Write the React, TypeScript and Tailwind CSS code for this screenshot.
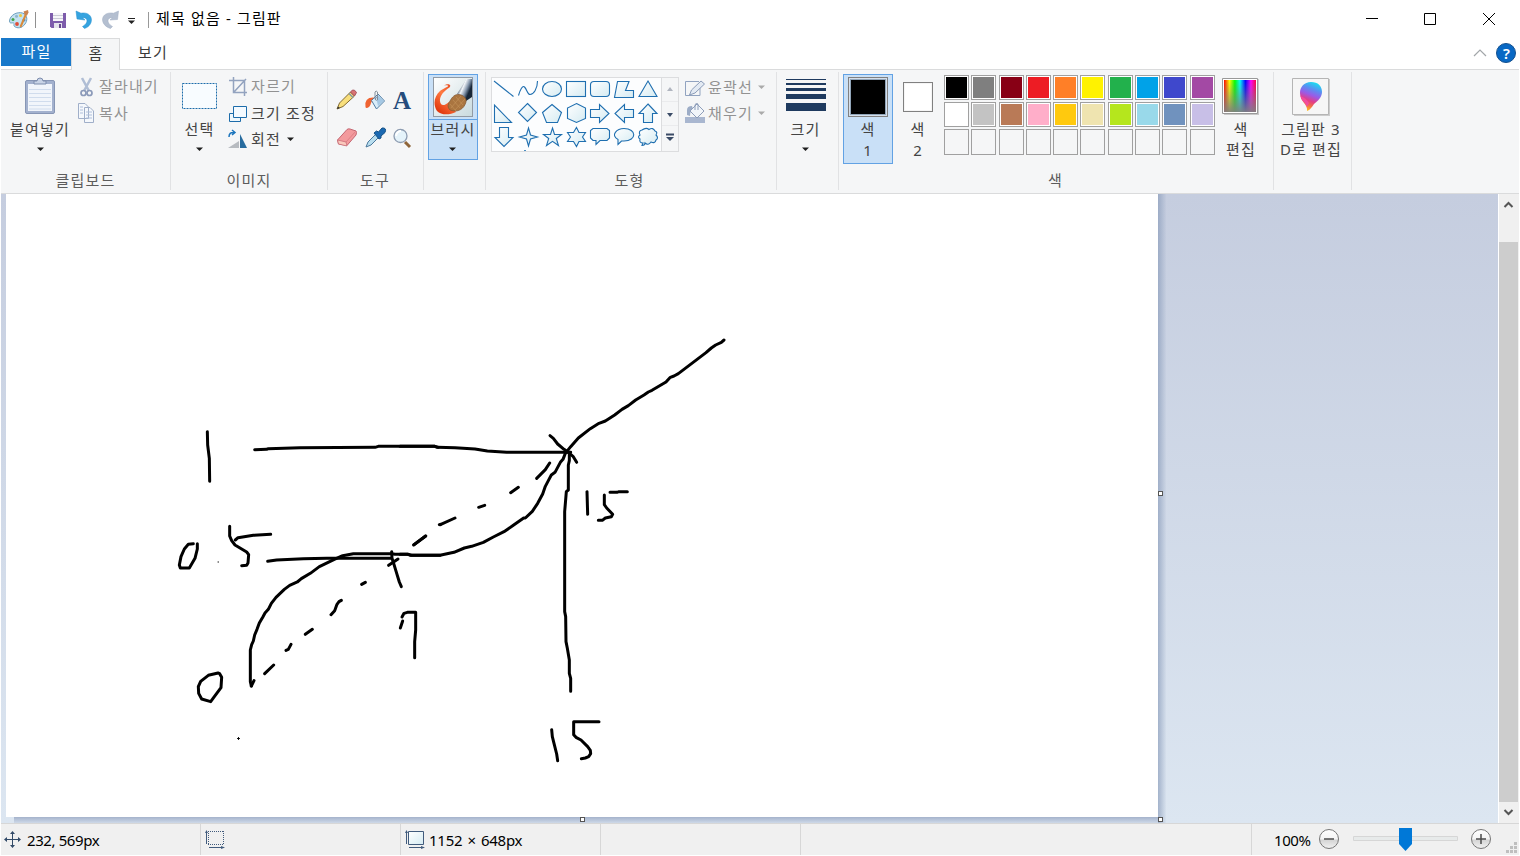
import type { ReactNode } from 'react';

type IconProps = { box: string; w: number; h: number; className?: string; children: ReactNode };

function Icon({ box, w, h, className = '', children }: IconProps) {
  return (
    <svg viewBox={box} width={w} height={h} fill="none" className={'block shrink-0 ' + className}>
      {children}
    </svg>
  );
}

function Caret({ color = '#1e1e1e', className = '' }: { color?: string; className?: string }) {
  return (
    <Icon box="0 0 7 4" w={7} h={4} className={className}>
      <path d="M0 0.5H7L3.5 4Z" fill={color} />
    </Icon>
  );
}

function Group({ label, className, children }: { label?: string; className: string; children?: ReactNode }) {
  return (
    <section className={'flex h-[118px] shrink-0 flex-col border-r border-[#e1e2e4] ' + className}>
      <div className="flex h-[96px] shrink-0 items-start">{children}</div>
      <div className="text-center leading-[24px] text-[#5c5c5c]">{label}</div>
    </section>
  );
}

const stroke = '#1f6fb0';

const shapes: ReactNode[] = [
  <path d="M-10 -8L9.500 7.500" />,
  <path d="M-9.500 6.500C-8 1-5.500-4-3.500-2C-1 0.500-0.500 5.500 2 5.500C5.500 5.500 9.500 0 9.500-8" fill="none" />,
  <ellipse rx="9.500" ry="7.500" />,
  <rect x="-9.500" y="-7.500" width="19" height="15" />,
  <rect x="-9.500" y="-7.500" width="19" height="15" rx="3.500" />,
  <path d="M-6.500-7.500H5L1.500 1.500H9.500V8.500H-9.500Z" />,
  <path d="M0-8L9 7.500H-9Z" />,
  <path d="M-9.500-8V9.500H7.500Z" />,
  <path d="M-0.500-9.500L8.500-0.500L-0.500 8.500L-9.500-0.500Z" />,
  <path d="M0-8.500L9.500-0.500L5.500 9.500H-5.500L-9.500-0.500Z" />,
  <path d="M0.500-9.500L9.500-5V5.500L0.500 9.500L-8.500 5.500V-5Z" />,
  <path d="M-9.500-3.500H-0.500V-8.500L9 0.500L-0.500 9.500V4.500H-9.500Z" />,
  <path d="M9.500-3.500H0.500V-8.500L-9 0.500L0.500 9.500V4.500H9.500Z" />,
  <path d="M0-9L9 0.500H4.500V9.500H-4.500V0.500H-9Z" />,
  <path d="M-4.500-9.500H4.500V0.500H9L0 9.500L-9 0.500H-4.500Z" />,
  <path d="M0.500-9L2.500-2L9.500 0L2.500 2L0.500 9L-1.500 2L-8.500 0L-1.500-2Z" />,
  <path d="M0.500-9L2.500-2.500H9.500L4.300 1.500L6.500 8.500L0.500 4.300L-5.500 8.500L-3.300 1.500L-8.500-2.500H-1.500Z" />,
  <path d="M0.500-9.500L3-4.500H9.500L6.500 0L9.500 4.500H3L0.500 9.500L-2.500 4.500H-8.500L-5.500 0L-8.500-4.500H-2.500Z" />,
  <path d="M-7-8.500H7L9.500-6.500V1L7 3.500H0L-4 7.500V3.500H-7L-9.500 1V-6.500Z" />,
  <path d="M-6 7.500L-6 2.500C-14-2-7-8.500 0-8.500C13-8.500 13 4 0 4H-2.500Z" />,
  <path d="M-6-7Q-2-10 1-7.500Q5-10 7-6Q10-5 8-2Q11 1 8 3Q7 7 3 5Q0 9-3 6Q-3 8.500-6 8.500L-5 6Q-9 6-8 2Q-11 0-8-2Q-10-6-6-7Z" />,
];

const swatches = [
  '#000000', '#7f7f7f', '#880015', '#ed1c24', '#ff7f27', '#fff200', '#22b14c', '#00a2e8', '#3f48cc', '#a349a4',
  '#ffffff', '#c3c3c3', '#b97a57', '#ffaec9', '#ffc90e', '#efe4b0', '#b5e61d', '#99d9ea', '#7092be', '#c8bfe7',
];

function Gradients() {
  return (
    <svg width="0" height="0" className="absolute">
      <defs>
        <linearGradient id="shape" x1="0" y1="0" x2="1" y2="1">
          <stop offset="0" stopColor="#ffffff" />
          <stop offset="1" stopColor="#d5ebf2" />
        </linearGradient>
        <linearGradient id="spectrum">
          <stop offset="0" stopColor="#ff0000" />
          <stop offset="0.17" stopColor="#ffff00" />
          <stop offset="0.34" stopColor="#00ff00" />
          <stop offset="0.5" stopColor="#00ffff" />
          <stop offset="0.67" stopColor="#0000ff" />
          <stop offset="0.84" stopColor="#ff00ff" />
          <stop offset="1" stopColor="#ff0040" />
        </linearGradient>
        <linearGradient id="fade" x1="0" y1="0" x2="0" y2="1">
          <stop offset="0" stopColor="#808080" stopOpacity="0" />
          <stop offset="1" stopColor="#808080" stopOpacity="0.95" />
        </linearGradient>
        <linearGradient id="drop" x1="0.65" y1="0" x2="0.35" y2="1">
          <stop offset="0" stopColor="#16e0f0" />
          <stop offset="0.25" stopColor="#5b8df2" />
          <stop offset="0.45" stopColor="#9a5be6" />
          <stop offset="0.65" stopColor="#e33d88" />
          <stop offset="0.8" stopColor="#f06a4a" />
          <stop offset="1" stopColor="#ffc41c" />
        </linearGradient>
        <linearGradient id="sweep" x1="1" y1="0" x2="0.4" y2="1">
          <stop offset="0" stopColor="#e04018" />
          <stop offset="0.5" stopColor="#ff7b42" />
          <stop offset="1" stopColor="#e33a10" />
        </linearGradient>
        <linearGradient id="tile" x1="0" y1="0" x2="1" y2="1">
          <stop offset="0" stopColor="#ffffff" />
          <stop offset="1" stopColor="#c9dade" />
        </linearGradient>
        <linearGradient id="ferrule" x1="0.15" y1="0.3" x2="0.85" y2="0.75">
          <stop offset="0" stopColor="#2a3c55" />
          <stop offset="0.3" stopColor="#f4f7fa" />
          <stop offset="0.6" stopColor="#8092a8" />
          <stop offset="0.85" stopColor="#172638" />
        </linearGradient>
        <linearGradient id="knob" x1="0" y1="0" x2="0" y2="1">
          <stop offset="0" stopColor="#ffffff" />
          <stop offset="0.5" stopColor="#f4f4f4" />
          <stop offset="0.55" stopColor="#d4d4d4" />
          <stop offset="1" stopColor="#f2f2f2" />
        </linearGradient>
      </defs>
    </svg>
  );
}

function TitleBar() {
  return (
    <header className="flex h-[38px] shrink-0 items-center">
      <Icon box="1 0 49 38" w={49} h={38}>
        <path d="M9.500 21C10 15 17 11.500 22.500 13C28 15 27.500 21 25 24C22 28.500 17 28.500 14.500 26.500C13 25 15 23.500 13.500 23C12 22.500 9.500 24 9.500 21Z" fill="#c4e2f1" stroke="#6d9fbe" />
        <circle cx="13" cy="19.500" r="1.500" fill="#47a447" /><circle cx="16.500" cy="16.200" r="1.500" fill="#8fb6cc" />
        <circle cx="20.500" cy="15.500" r="1.500" fill="#f0c93c" /><circle cx="17" cy="24" r="1.900" fill="#e04d38" /><circle cx="24" cy="20" r="1.500" fill="#4286ce" />
        <path d="M20.500 27L26 14" stroke="#d98a3a" strokeWidth="2" />
        <path d="M24.500 14.500L23.500 11.500L28 10L28.500 12.500L27 15.500Z" fill="#c98450" />
        <path d="M35.500 12V28" stroke="#909090" />
      </Icon>
      <Icon box="50 0 22 38" w={22} h={38}>
        <path d="M50 13H66V28H51.500L50 26.500V13Z" fill="#7d5cab" />
        <path d="M53 13H63V21H53Z" fill="#f6f6f9" /><path d="M53 15.500H63M53 18.500H63" stroke="#cacbd6" />
        <path d="M54 23H62V28H54Z" fill="#e4e3eb" /><path d="M59 24H61V28H59Z" fill="#65488e" />
      </Icon>
      <Icon box="72 0 26 38" w={26} h={38}>
        <path d="M76 11L77 19L85 20L82.500 17.700C88 17 89 23 82.500 26.500L84.500 28.500C95 25 93.500 11 81 13.200Z" fill="#35a3df" stroke="#238fce" strokeWidth=".5" />
      </Icon>
      <Icon box="98 0 26 38" w={26} h={38}>
        <path d="M118.500 11L117.500 19.500L110 20L112.500 17.700C107 17 106 23 112.500 26.500L110.500 28.500C99 25 100 11 113.500 13.200Z" fill="#b4bfd0" stroke="#9fadc2" strokeWidth=".5" />
      </Icon>
      <Icon box="124 0 32 38" w={32} h={38}>
        <path d="M128 18.500H135" stroke="#222" /><path d="M128 20.500H135L131.500 24Z" fill="#222" />
        <path d="M148.500 12V28" stroke="#999" />
      </Icon>
      <h1 className="mb-[2px] grow whitespace-nowrap text-[15px] leading-[36px] tracking-[1.15px] text-black">제목 없음 - 그림판</h1>
      <Icon box="1344 0 175 38" w={175} h={38}>
        <path d="M1366 18.500H1378M1424.500 13.500H1435.500V24.500H1424.500ZM1483 13L1495 25M1495 13L1483 25" stroke="#000" />
      </Icon>
    </header>
  );
}

function Tabs() {
  return (
    <nav className="flex h-8 shrink-0 text-[#3a3a3a]">
      <div className="flex grow border-b border-[#dadbdc]">
        <div className="h-7 w-[70px] bg-[#1979ca] pl-px text-center leading-[27px] text-white">파일</div>
        <div className="-mb-px w-[49px] border-x border-t border-[#dadbdc] bg-[#f5f6f7] pl-px text-center leading-[28px]">홈</div>
        <div className="ml-[18px] leading-[29px]">보기</div>
        <Icon box="1472 38 47 31" w={47} h={31} className="ml-auto">
          <path d="M1474 56L1480 50L1486 56" stroke="#a2a6a9" strokeWidth="1.200" />
          <circle cx="1506" cy="53" r="9.500" fill="#0868c4" stroke="#14508e" />
          <text x="1506.500" y="58.500" textAnchor="middle" fontSize="15" letterSpacing="0" fontWeight="600" fill="#fff" fontFamily="Noto Sans">?</text>
        </Icon>
      </div>
    </nav>
  );
}

function Clipboard() {
  return (
    <Group label="클립보드" className="w-[170px]">
      <div className="flex w-[77px] flex-col items-center pt-[5px] text-[#444]">
        <Icon box="23 77 34 40" w={34} h={40}>
          <rect x="25.500" y="80.500" width="29" height="33" rx="1.500" fill="#a3b1ce" stroke="#8796b5" />
          <path d="M28 84H52V111H28Z" fill="#f1f5fb" />
          <path d="M29 89.500H51M29 93.500H51M29 97.500H51M29 101.500H51M29 105.500H51M29 109H51" stroke="#d0dced" />
          <path d="M34 84V81H37Q37 78 40 78Q43 78 43 81H46V84Z" fill="#c8d3e6" stroke="#7d8dad" />
        </Icon>
        <div className="mt-[2px] pl-px leading-[20px]">붙여넣기</div>
        <Caret className="mt-[8px] ml-px" />
      </div>
      <div className="flex flex-col text-[#929292]">
        <div className="flex h-[29px] items-center gap-[3px]">
          <Icon box="78 76 18 22" w={18} h={22}>
            <path d="M82 78L89 91M91 78L84 91" stroke="#b0bed5" strokeWidth="2.500" />
            <circle cx="83.500" cy="93" r="2.500" stroke="#8b9ab9" strokeWidth="1.700" /><circle cx="89.500" cy="93" r="2.500" stroke="#8b9ab9" strokeWidth="1.700" />
          </Icon>
          <span>잘라내기</span>
        </div>
        <div className="flex h-[24px] items-center gap-[3px]">
          <Icon box="78 102 18 22" w={18} h={22}>
            <path d="M78.500 103.500H85L88.500 107V118.500H78.500ZM84.500 107.500H90L93.500 111V122.500H84.500Z" fill="#f5f8fc" stroke="#a0afc9" />
            <path d="M80 107H83M80 110H83M80 113H83M86 112H92M86 115H92M86 118H92" stroke="#b0c0db" />
          </Icon>
          <span>복사</span>
        </div>
      </div>
    </Group>
  );
}

function ImageGroup() {
  return (
    <Group label="이미지" className="w-[157px]">
      <div className="flex w-[57px] flex-col items-center pt-[10px] text-[#444]">
        <Icon box="181 82 36 28" w={36} h={28}>
          <rect x="181.500" y="83.500" width="34" height="25" fill="#f8fcff" stroke="#1d6caa" strokeDasharray="2 1" />
        </Icon>
        <div className="mt-[9px] leading-[20px]">선택</div>
        <Caret className="mt-[8px]" />
      </div>
      <div className="flex flex-col text-[#444]">
        <div className="flex h-[29px] items-center gap-[3px] text-[#929292]">
          <Icon box="228 77 20 20" w={20} h={20}>
            <path d="M229 80.500H244.500V96M233.500 77V92.500H247M234 92L246 79" stroke="#93a3bf" strokeWidth="1.500" />
          </Icon>
          <span>자르기</span>
        </div>
        <div className="flex h-[25px] items-center gap-[3px]">
          <Icon box="228 104 20 20" w={20} h={20}>
            <path d="M229.500 113.500H240.500V121.500H229.500Z" fill="#eef7fc" stroke="#1d6caa" /><path d="M233.500 106.500H246.500V117.500H233.500Z" fill="#f4faff" stroke="#1d6caa" />
          </Icon>
          <span className="whitespace-nowrap">크기 조정</span>
        </div>
        <div className="flex h-[26px] items-center gap-[3px]">
          <Icon box="228 128 20 20" w={20} h={20}>
            <path d="M240 133L247 147H240Z" fill="#276b9e" /><path d="M228 147L239 140V147Z" fill="#b7bbc0" />
            <path d="M229 136Q229 131 234 131.500M232 129L235 131.500L232 134" stroke="#1c75bd" strokeWidth="1.500" />
          </Icon>
          <span>회전</span>
          <Caret className="ml-[3px]" />
        </div>
      </div>
    </Group>
  );
}

function Tools() {
  return (
    <Group label="도구" className="w-[96px] pr-px">
      <div className="ml-[7px] grid grid-cols-3 gap-y-[10px] pt-[14px]">
        <Icon box="335 86 28 28" w={28} h={28}>
          <path d="M337 109L339.500 103L350.500 92L354.500 96L343 106.500Z" fill="#f8df7c" stroke="#826a31" />
          <path d="M350.500 92L352.500 90Q355 89.500 356.500 92.500L354.500 96Z" fill="#d97373" stroke="#a6525c" /><path d="M349 93.500L353 97.500" stroke="#7d9aa8" strokeWidth="1.500" /><path d="M337 109L338 106.500L340 108Z" fill="#333" />
        </Icon>
        <Icon box="363 86 28 28" w={28} h={28}>
          <path d="M365.500 107Q364 97 374 97.500L371 103Q370 108 366 108Z" fill="#ef6331" />
          <path d="M371.500 100.500L378 94L384.500 101L376.500 109Z" fill="#d9edf9" stroke="#4e7ba2" /><path d="M376 97L378 95L384 101L378 106Z" fill="#a5c8e4" />
          <path d="M375 99V92Q376 90 377.500 92V99" stroke="#84909c" /><circle cx="376.500" cy="99" r="1.200" fill="#fff" stroke="#72869c" />
        </Icon>
        <div className="flex size-[28px] items-center justify-center pr-[6px] font-['Liberation_Serif',serif] text-[25px] leading-none font-bold tracking-normal text-[#254c7c]">A</div>
        <Icon box="335 126 28 28" w={28} h={28}>
          <path d="M337.500 142L347 131.500Q348 130.500 350 131L356 133Q357 134 356 137L347 147.500L338.500 146Z" fill="#f39a9d" stroke="#c46672" />
          <path d="M337.500 142L346 144L347 148L338.500 146Z" fill="#fac9bd" stroke="#c46672" strokeWidth=".7" /><path d="M346 144L356 133" stroke="#df7f86" />
        </Icon>
        <Icon box="363 125 28 28" w={28} h={28}>
          <path d="M366 148L368 143L376 135L379 138L371 146Z" fill="#b9deef" stroke="#4b799d" />
          <path d="M374 134L376.500 132L378.500 133L382 129Q387 128.500 385 133.500L381 137V139L379 140Z" fill="#1b69b2" stroke="#145187" />
        </Icon>
        <Icon box="391 124 28 28" w={28} h={28}>
          <path d="M405 142L410 147" stroke="#8e6539" strokeWidth="3" /><circle cx="400.500" cy="136" r="6.500" fill="#e5f3fa" stroke="#8d9cb1" strokeWidth="1.300" />
          <path d="M396 136Q397 131 401 131" stroke="#fff" strokeWidth="2" />
        </Icon>
      </div>
    </Group>
  );
}

function Brush() {
  return (
    <Group className="w-[62px]">
      <button className="mt-[2px] ml-[4px] flex h-[86px] w-[50px] flex-col items-center border border-[#62a2e4] bg-[#c9e0f7] text-[#444]">
        <div className="flex h-[45px] w-full items-start justify-center border-b border-[#62a2e4] pt-[2px]">
          <Icon box="433 77 40 40" w={40} h={40}>
            <rect x="433.500" y="77.500" width="39" height="39" fill="url(#tile)" stroke="#929aa4" />
            <path d="M444 85.500C448 83 452 84.500 449.500 87.500C444 91 439.500 96 440 101C440.500 106 444 106.500 449 102L456 112C449 115.500 441 115 437 111C432.500 104 434.500 96 440 91C444 88 448.500 87 448 85.800C447 85 446 85.500 444 85.500Z" fill="url(#sweep)" />
            <path d="M457 94L466.500 79H472V97L466 101Z" fill="url(#ferrule)" />
            <path d="M450 110Q446 106 450 101C452 97 455 94 459 94.500C463 95 467 98 466 102C464 109 458 113 450 110Z" fill="#aa7540" stroke="#805632" strokeWidth=".7" />
            <path d="M450 104L456 111M453 100L460 108M456 97L463 105M451 108L461 96M455 110L465 99" stroke="#ca9a61" strokeWidth=".5" />
          </Icon>
        </div>
        <span className="h-[20px] leading-[19px]">브러시</span>
        <Caret className="mt-[7px] mr-[2px]" />
      </button>
    </Group>
  );
}

function Shapes() {
  return (
    <Group label="도형" className="w-[291px] pr-[3px]">
      <div className="mt-[5px] ml-[5px] flex h-[75px] shrink-0 border border-[#dcdddf]">
        <div className="grid w-[169px] grid-cols-[repeat(7,24px)] content-start bg-[#fcfdfe] [clip-path:inset(0_0_0_0)]">
          {shapes.map((shape, i) => (
            <Icon key={i} box="-12 -11 24 24" w={24} h={24}>
              <g fill="url(#shape)" stroke={stroke} strokeWidth="1.100">{shape}</g>
            </Icon>
          ))}
          <div className="col-start-2 ml-[8px] h-px w-[2px] bg-[#4d8fc2]" />
        </div>
        <div className="flex w-[17px] flex-col border-l border-[#dcdddf]">
          <Icon box="662 78 16 73" w={16} h={73}>
            <path d="M667 91H673L670 87Z" fill="#b0b5bf" /><path d="M662 101.500H678M662 125.500H678" stroke="#eaebed" />
            <path d="M667 113H673L670 117Z" fill="#3a4b66" /><path d="M666 134.500H674" stroke="#3a4b66" strokeWidth="2" /><path d="M666 137H674L670 141Z" fill="#3a4b66" />
          </Icon>
        </div>
      </div>
      <div className="ml-[6px] flex shrink-0 flex-col pt-[2px] text-[#929292]">
        <div className="flex h-[26px] items-center gap-[2px]">
          <Icon box="685 78 21 20" w={21} h={20}>
            <path d="M700 89V96.500H685.500V82.500H699" stroke="#91a3c0" /><path d="M689.500 96L691.500 91L701 82L704.500 85L695 94Z" fill="#e3eaf3" stroke="#8b9cb8" />
          </Icon>
          <span>윤곽선</span>
          <Caret color="#aaaaaa" className="ml-[3px]" />
        </div>
        <div className="flex h-[26px] items-center gap-[2px]">
          <Icon box="685 103 21 20" w={21} h={20}>
            <path d="M685 117H705V123H685Z" fill="#a9b7d0" /><path d="M687 115V110Q687 106 692 106L693 109Q690 111 690 116Z" fill="#9dadc7" />
            <path d="M690 111L697 104L704 111L697 118Z" fill="#f2f6fa" stroke="#8e9eba" /><path d="M695 110V105Q696 102 698 104V110" stroke="#8e9eba" />
          </Icon>
          <span>채우기</span>
          <Caret color="#aaaaaa" className="ml-[3px]" />
        </div>
      </div>
    </Group>
  );
}

function Size() {
  return (
    <Group className="w-[62px]">
      <div className="flex w-[57px] flex-col items-center pt-[7px] text-[#444]">
        <div className="flex w-[40px] flex-col">
          <div className="h-px bg-[#1e3a5f]" />
          <div className="mt-[3px] h-[2px] bg-[#1e3a5f]" />
          <div className="mt-[3px] h-[3px] bg-[#1e3a5f]" />
          <div className="mt-[3px] h-[5px] bg-[#1e3a5f]" />
          <div className="mt-[4px] h-[8px] bg-[#1e3a5f]" />
        </div>
        <span className="mt-[8px] leading-[20px]">크기</span>
        <Caret className="mt-[8px]" />
      </div>
    </Group>
  );
}

function Colors() {
  return (
    <Group label="색" className="w-[435px] pr-px">
      <div className="mt-[2px] ml-[4px] flex h-[90px] w-[50px] flex-col items-center border border-[#62a2e4] bg-[#c9e0f7] pt-[2px] text-[#444]">
        <div className="size-[40px] border border-[#808080] bg-black shadow-[inset_0_0_0_1px_#d5dfeb,inset_0_0_0_2px_#92a6ba]" />
        <div className="mt-[2px] text-center leading-[21px]">색<br />1</div>
      </div>
      <div className="flex w-[50px] flex-col items-center pt-[10px] text-[#444]">
        <div className="size-[30px] border border-[#808080] bg-white shadow-[inset_0_0_0_1px_#f5f5f5]" />
        <div className="mt-[7px] text-center leading-[21px]">색<br />2</div>
      </div>
      <div className="mt-[3px] ml-px grid w-[273px] shrink-0 grid-cols-10 gap-y-[2px]">
        {swatches.map((color, i) => (
          <div key={i} className="h-[25px] w-[25px] border border-[#a0a0a0] bg-white p-px">
            <div className="size-full" style={{ backgroundColor: color }} />
          </div>
        ))}
        {Array.from({ length: 10 }, (_, i) => (
          <div key={i} className="h-[26px] w-[25px] border border-[#a0a0a0]" />
        ))}
      </div>
      <div className="flex w-[47px] flex-col items-center pt-[6px] text-[#444]">
        <Icon box="1222 78 37 37" w={37} h={37}>
          <path d="M1224 79H1259V115H1224Z" fill="#c8c8c8" />
          <path d="M1222.500 78.500H1257.500V113.500H1222.500Z" fill="#fff" stroke="#999" />
          <path d="M1224 80H1256V112H1224Z" fill="url(#spectrum)" /><path d="M1224 80H1256V112H1224Z" fill="url(#fade)" />
        </Icon>
        <div className="mt-[4px] pl-px text-center leading-[20px]">색<br />편집</div>
      </div>
    </Group>
  );
}

function Paint3D() {
  return (
    <Group className="w-[78px]">
      <div className="flex w-[74px] flex-col items-center pt-[6px] text-[#444]">
        <Icon box="1292 78 38 38" w={38} h={38}>
          <path d="M1294 79H1330V116H1294Z" fill="#ccc" /><path d="M1292.500 78.500H1328.500V114.500H1292.500Z" fill="#f6f6f6" stroke="#b5b5b5" />
          <path d="M1311 82C1304 82 1300 87 1300 93C1300 102 1308 104 1307 111C1310 110 1312 107 1314 104C1318 101 1322 97 1322 92C1322 86 1318 82 1311 82Z" fill="url(#drop)" />
          <path d="M1300.500 96Q1306 98 1309 103L1307 107Q1306 103 1302 100Z" fill="#f14d9d" />
        </Icon>
        <div className="mt-[3px] text-center leading-[20px] whitespace-nowrap">그림판 3<br />D로 편집</div>
      </div>
    </Group>
  );
}

function Drawing() {
  return (
    <svg viewBox="6 194 1152 623" width="1152" height="623" fill="none" stroke="#000" strokeLinecap="round" strokeLinejoin="round" className="block">
      <g transform="translate(160 420) scale(.33333)" strokeWidth="9">
        <path d="M142 35L143 75L148 115L149 184" />
        <path d="M284 89L320 88L325 86L420 83L645 82L655 79L825 79L835 82" />
        <path d="M100 371L85 373L73 387L63 410L58 435L61 444H88L105 415L112 387V371" />
        <path d="M209 319V348L215 362L225 375L245 387L260 396L266 404L264 429L260 436L245 437" />
        <path d="M226 360L234 353L280 346L332 343" />
        <path d="M323 424L350 420L430 416L500 415H695" />
        <path d="M274 798L271 785V690L275 674L280 663L284 645L291 628L298 609L309 590L315 579L325 568L334 550L348 532L373 508L389 496L412 486L424 476L451 460L478 440L523 418L548 407L580 401H695L705 403L742 403L755 406H840" />
        <path d="M274 798L282 782M314 761L341 735M378 691L385 688L393 673M436 643L457 628M513 584L524 572L531 553L537 545L544 541M605 493L616 487M686 436L714 417M762 374L797 348M838 314L842 313" />
        <path d="M695 395L696 415L701 430L711 463L718 486L724 500" />
        <path d="M721 624L728 603M726 591L732 580L742 577H767V630L764 665V713" />
        <path d="M174 759L145 766L122 784L115 800L116 820L125 837L152 845L163 830L183 803L185 772L179 761Z" />
      </g>
      <path d="M218 562H218.500M237.500 738.500H239.500M238.500 737.500V739.500" strokeWidth="1" />
      <g transform="translate(400 320) scale(.33333)" strokeWidth="9">
        <path d="M0 379H104L112 382L165 383L225 387L262 393L320 397H512" />
        <path d="M450 347L460 355L473 372L492 388L505 397L519 409L530 427" />
        <path d="M972 60L964 67L947 75L934 84L918 98L835 161L822 168L811 172L798 186L756 211L745 216L732 225L707 240L685 257L666 268L644 285L616 303L597 310L571 326L535 354L512 380L496 400L489 418L481 427L465 457L454 465L445 482L436 499L428 522L413 550L397 574L376 594L371 594L340 616L312 635L280 651L250 667L215 679L193 684L162 697L120 706H32L25 703H0" />
        <path d="M508 397V422L505 435V510L499 515L494 575V875L497 890L498 965L502 985L508 1020V1060L512 1075V1114" />
        <path d="M41 675L77 648M121 614L165 594M236 562L254 556M332 518L355 502M410 475L436 449L449 429" />
        <path d="M561 515L563 583M682 515H657L651 517H630M613 525V554L620 564L638 583L634 590L616 594L607 601H595" />
        <path d="M455 1229L457 1250L462 1270L470 1302L473 1322M597 1205H521V1244L528 1252L543 1260L563 1280L571 1291L572 1301L566 1310L556 1314L544 1316" />
      </g>
    </svg>
  );
}

function Handle({ className }: { className: string }) {
  return <div className={'absolute size-[5px] border border-[#555] bg-white ' + className} />;
}

function Workspace() {
  return (
    <main className="flex h-[629px] shrink-0">
      <div className="relative grow overflow-hidden bg-linear-to-b from-[#c5cddf] to-[#dce6f1] pl-[5px]">
        <div className="h-[623px] w-[1152px] bg-white"><Drawing /></div>
        <div className="absolute top-0 left-[1157px] h-[629px] w-[8px] bg-linear-to-r from-[#8b9dbb]/70 to-[#8b9dbb]/5" />
        <div className="absolute top-[623px] left-[13px] h-[6px] w-[1144px] bg-linear-to-b from-[#a5b3cc] to-[#ced9e8]" />
        <Handle className="top-[623px] left-[1157px]" />
        <Handle className="top-[623px] left-[579px]" />
        <Handle className="top-[297px] left-[1157px]" />
      </div>
      <div className="flex w-[21px] flex-col border-l border-white bg-[#f0f0f0]">
        <Icon box="1499 194 19 48" w={19} h={48}><path d="M1504.500 207L1508.500 203L1512.500 207" stroke="#555" strokeWidth="2" /></Icon>
        <div className="mr-px h-[560px] bg-[#cdcdcd]" />
        <Icon box="1499 802 19 21" w={19} h={21}><path d="M1504.500 810L1508.500 814L1512.500 810" stroke="#555" strokeWidth="2" /></Icon>
      </div>
    </main>
  );
}

function StatusBar() {
  return (
    <footer className="flex h-[32px] shrink-0 border-t border-[#d7d7d7] bg-[#f0f0f0] text-[15px] leading-[32px] tracking-[-0.4px] text-black">
      <div className="flex w-[200px] border-r border-[#d7d7d7]">
        <Icon box="1 824 26 31" w={26} h={31}>
          <path d="M5 839.500H20M12.500 832V847" stroke="#324a68" /><path d="M4 839.500L7 837V842ZM21 839.500L18 837V842ZM12.500 831L10 834H15ZM12.500 848L10 845H15Z" fill="#324a68" />
        </Icon>
        <span>232, 569px</span>
      </div>
      <div className="w-[200px] border-r border-[#d7d7d7]">
        <Icon box="201 824 26 31" w={26} h={31}>
          <path d="M208 831.500H224M208 844.500H224M208.500 831V845M223.500 831V845" stroke="#415b7c" strokeDasharray="1 1" /><path d="M206.500 832V844M209 847.500H223" stroke="#415b7c" /><path d="M205 833L206.500 830L208 833ZM221 846V849L225 847.500Z" fill="#415b7c" />
        </Icon>
      </div>
      <div className="flex w-[200px] border-r border-[#d7d7d7]">
        <Icon box="401 824 28 31" w={28} h={31}>
          <path d="M408.500 831.500H423.500V844.500H408.500Z" fill="url(#shape)" stroke="#415b7c" /><path d="M406.500 832V844M409 847.500H423" stroke="#415b7c" /><path d="M405 833L406.500 830L408 833ZM421 846V849L425 847.500Z" fill="#415b7c" />
        </Icon>
        <span className="tracking-[-0.25px] [word-spacing:1.5px]">1152 × 648px</span>
      </div>
      <div className="w-[200px] border-r border-[#d7d7d7]" />
      <div className="w-[451px] border-r border-[#d7d7d7]" />
      <div className="ml-[22px] w-[40px]">100%</div>
      <Icon box="1314 824 204 31" w={204} h={31}>
        <circle cx="1329" cy="839" r="9.500" fill="url(#knob)" stroke="#777" /><circle cx="1481" cy="839" r="9.500" fill="url(#knob)" stroke="#777" />
        <path d="M1324 839H1334M1476 839H1486M1481 834V844" stroke="#4c4c4c" strokeWidth="1.500" />
        <path d="M1353.500 836.500H1457.500V840.500H1353.500Z" fill="#e7eaea" stroke="#d6d6d6" />
        <path d="M1399 828H1412V844L1405.500 851L1399 844Z" fill="#0078d7" />
        <path d="M1514 842H1517V845H1514ZM1510 846H1513V849H1510ZM1514 846H1517V849H1514ZM1506 850H1509V853H1506ZM1510 850H1513V853H1510ZM1514 850H1517V853H1514Z" fill="#bfbfbf" />
      </Icon>
    </footer>
  );
}

export default function App() {
  return (
    <div className="flex h-[856px] w-[1520px] flex-col overflow-hidden bg-white px-px font-['Noto_Sans','Noto_Sans_CJK_KR',sans-serif] text-[15px] tracking-[1.15px]">
      <Gradients />
      <TitleBar />
      <Tabs />
      <div className="flex h-[124px] shrink-0 border-b border-[#dadbdc] bg-[#f5f6f7] pt-[2px]">
        <Clipboard />
        <ImageGroup />
        <Tools />
        <Brush />
        <Shapes />
        <Size />
        <Colors />
        <Paint3D />
      </div>
      <Workspace />
      <StatusBar />
    </div>
  );
}
